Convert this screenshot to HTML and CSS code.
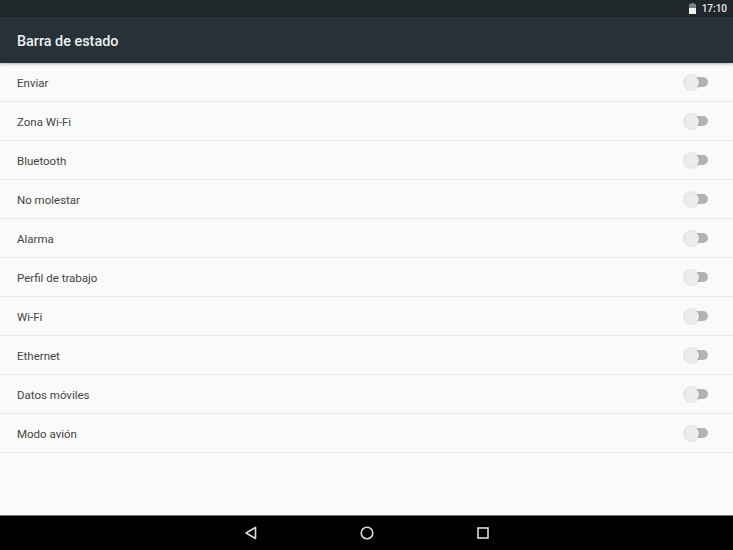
FILE: index.html
```html
<!DOCTYPE html>
<html lang="es">
<head>
    <meta charset="UTF-8">
    <meta name="viewport" content="width=device-width, initial-scale=1.0">
    <title>Barra de estado</title>
    <link rel="stylesheet" href="styles.css">
</head>
<body>

    <div class="status-bar">
        <svg class="battery" width="7" height="11" viewBox="0 0 7 11">
            <path d="M2 0h3v1h2v10H0V1h2z" fill="#7c8285"/>
            <path d="M0 5h7v6H0z" fill="#f2f2f2"/>
        </svg>
        <span class="clock">17:10</span>
    </div>

    <header class="app-bar">
        <h1>Barra de estado</h1>
    </header>

    <main class="list">
        <div class="row"><span>Enviar</span><div class="switch"><i class="thumb"></i></div></div>
        <div class="row"><span>Zona Wi-Fi</span><div class="switch"><i class="thumb"></i></div></div>
        <div class="row"><span>Bluetooth</span><div class="switch"><i class="thumb"></i></div></div>
        <div class="row"><span>No molestar</span><div class="switch"><i class="thumb"></i></div></div>
        <div class="row"><span>Alarma</span><div class="switch"><i class="thumb"></i></div></div>
        <div class="row"><span>Perfil de trabajo</span><div class="switch"><i class="thumb"></i></div></div>
        <div class="row"><span>Wi-Fi</span><div class="switch"><i class="thumb"></i></div></div>
        <div class="row"><span>Ethernet</span><div class="switch"><i class="thumb"></i></div></div>
        <div class="row"><span>Datos móviles</span><div class="switch"><i class="thumb"></i></div></div>
        <div class="row"><span>Modo avión</span><div class="switch"><i class="thumb"></i></div></div>
    </main>

    <nav class="nav-bar">
        <svg width="14" height="14" viewBox="0 0 14 14"><path d="M11.5 1.5v11L2 7z" fill="none" stroke="#dcdcdc" stroke-width="1.6" stroke-linejoin="round"/></svg>
        <svg width="14" height="14" viewBox="0 0 14 14"><circle cx="7" cy="7" r="5.8" fill="none" stroke="#dcdcdc" stroke-width="1.6"/></svg>
        <svg width="14" height="14" viewBox="0 0 14 14"><rect x="2" y="2" width="10" height="10" fill="none" stroke="#dcdcdc" stroke-width="1.6"/></svg>
    </nav>

</body>
</html>
```

FILE: styles.css
```css
* {
    box-sizing: border-box;
}
html, body {
    height: 100%;
}
body {
    margin: 0;
    display: flex;
    flex-direction: column;
    height: 550px;
    overflow: hidden;
    font-family: Roboto, "Liberation Sans", sans-serif;
    background-color: #fafafa;
}
.status-bar {
    height: 17px;
    padding-right: 6px;
    display: flex;
    align-items: center;
    justify-content: flex-end;
    gap: 6px;
    background-color: #1f272b;
    color: #e8e8e8;
    font-size: 10px;
    font-weight: 500;
}
.app-bar {
    height: 46px;
    padding: 2px 0 0 17px;
    display: flex;
    align-items: center;
    background-color: #263238;
    box-shadow: 0 1px 3px rgba(0, 0, 0, 0.3);
}
.app-bar h1 {
    margin: 0;
    font-size: 14.4px;
    font-weight: 500;
    color: #eef0f1;
}
.list {
    flex: 1;
}
.row {
    height: 39px;
    padding: 0 25px 0 17px;
    display: flex;
    align-items: center;
    justify-content: space-between;
    border-bottom: 1px solid #e9e9e9;
    font-size: 11.5px;
    color: #444;
}
.row span {
    padding-top: 1px;
}
.switch {
    position: relative;
    width: 24px;
    height: 10px;
    border-radius: 5px;
    background-color: #b3b3b3;
}
.thumb {
    position: absolute;
    left: 0;
    top: -2px;
    width: 15px;
    height: 15px;
    border-radius: 50%;
    background-color: #ececec;
    box-shadow: 0 0 2px rgba(0, 0, 0, 0.25);
}
.nav-bar {
    height: 35px;
    display: flex;
    align-items: center;
    justify-content: center;
    gap: 102px;
    background-color: #000;
    border-top: 1px solid #777;
}
```
